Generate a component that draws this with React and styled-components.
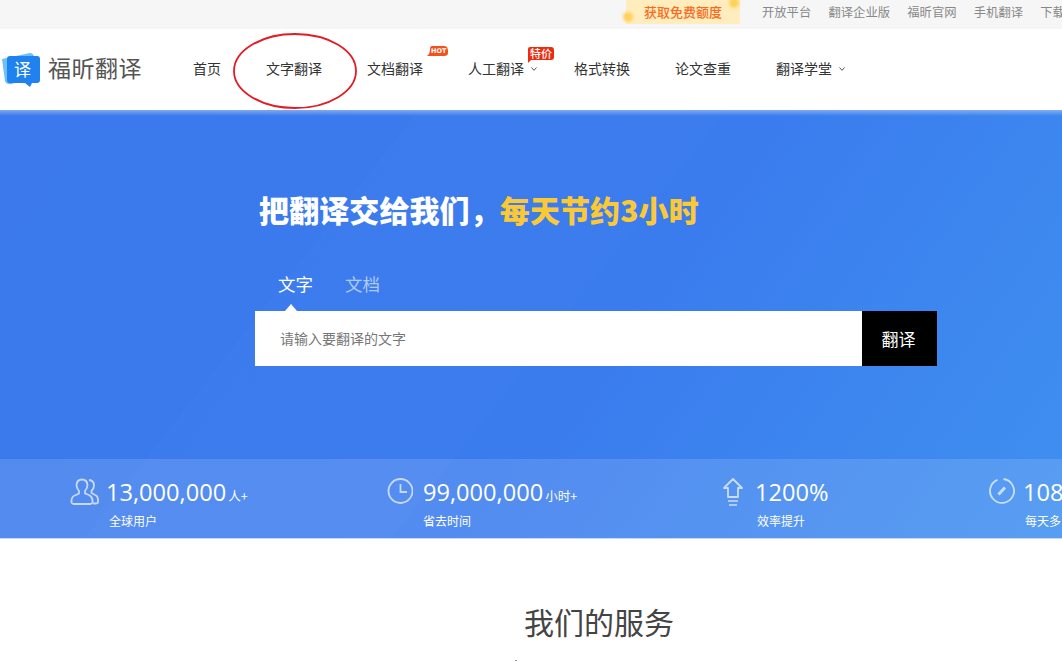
import styled, { createGlobalStyle } from 'styled-components'

const Global = createGlobalStyle`
html,body{margin:0;padding:0;background:#fff;overflow:hidden;}
body{font-family:"Noto Sans CJK SC","Noto Sans",sans-serif;}
*{box-sizing:border-box;}
`
const Page = styled.div`
position:relative;
width:1062px;
height:661px;
overflow:hidden;
display:flex;
flex-direction:column;
`
const TopBar = styled.div`
height:29px;
flex:none;
background:#f6f6f6;
display:flex;
padding-left:626px;
font-size:12.3px;
color:#888;
white-space:nowrap;
`
const Promo = styled.div`
position:relative;
flex:none;
width:114px;
height:24px;
padding-bottom:2px;
background:#ffedbd;
color:#fb6a1c;
font-weight:500;
display:flex;
align-items:center;
justify-content:center;
font-size:13px;
`
const Spark = styled.span`
position:absolute;
width:10px;
height:10px;
border-radius:50%;
background:#fdd15b;
filter:blur(1.5px);
left:${p => p.$x}px;
top:${p => p.$y}px;
`
const TopLinks = styled.div`
display:flex;
flex:none;
gap:17.3px;
margin-left:22px;
height:24px;
align-items:center;
`
const TopLink = styled.span`
flex:none;
`
const Nav = styled.div`
height:81px;
flex:none;
display:flex;
align-items:center;
background:#fff;
`
const Logo = styled.div`
width:193px;
flex:none;
display:flex;
align-items:center;
gap:8px;
`
const LogoText = styled.span`
font-size:23px;
color:#555;
letter-spacing:0.5px;
margin-bottom:6px;
`
const Menu = styled.div`
display:flex;
gap:45px;
font-size:14px;
color:#333;
margin-bottom:3px;
`
const MenuItem = styled.div`
position:relative;
white-space:nowrap;
line-height:20px;
padding-right:${p => (p.$pad ? 5 : 0)}px;
`
const Chevron = styled.svg`
position:absolute;
left:63px;
top:9px;
width:6px;
height:4px;
`
const HotTag = styled.svg`
position:absolute;
left:60px;
top:-12px;
width:22px;
height:13px;
`
const HotText = styled.span`
position:absolute;
left:64px;
top:-12px;
font-family:"DejaVu Sans",sans-serif;
font-weight:bold;
font-size:6.5px;
line-height:11px;
color:#fff;
`
const PriceTag = styled.span`
position:absolute;
left:60px;
top:-11px;
width:26px;
height:13px;
background:#ef2b0e;
border-radius:2px 3px 3px 0;
color:#fff;
font-size:11px;
font-weight:500;
line-height:13px;
text-align:center;
&::after{
 content:'';
 position:absolute;
 left:0;
 top:13px;
 border-top:3px solid #ef2b0e;
 border-right:3px solid transparent;
}
`
const Ring = styled.svg`
position:absolute;
left:230px;
top:30px;
width:130px;
height:82px;
`
const Hero = styled.div`
position:relative;
height:429px;
flex:none;
overflow:hidden;
color:#fff;
background:
 linear-gradient(180deg,rgba(255,255,255,.35) 0,rgba(255,255,255,0) 6px),
 linear-gradient(128deg,transparent 0 30%,rgba(255,255,255,.012) 30% 52%,transparent 52%),
 linear-gradient(125deg,#3b79ec 0,#3a7bee 55%,#3f90f0 100%);
display:flex;
flex-direction:column;
border-bottom:1px solid #c4d9f8;
`
const Main = styled.div`
height:349px;
flex:none;
padding:80px 0 0 255px;
`
const Headline = styled.h1`
margin:0 0 0 4px;
font-size:30px;
line-height:38px;
font-weight:900;
letter-spacing:0.1px;
white-space:nowrap;
`
const Gold = styled.span`
color:#fcc936;
`
const Tabs = styled.div`
display:flex;
gap:32px;
margin:42px 0 0 23px;
height:41px;
font-size:17.5px;
line-height:28px;
`
const Tab = styled.div`
position:relative;
color:${p => (p.$on ? '#fff' : 'rgba(255,255,255,.6)')};
&::after{
 content:'';
 display:${p => (p.$on ? 'block' : 'none')};
 position:absolute;
 left:7px;
 top:34px;
 border-left:6px solid transparent;
 border-right:6px solid transparent;
 border-bottom:7px solid #fff;
}
`
const SearchBox = styled.div`
display:flex;
width:682px;
height:55px;
`
const Input = styled.div`
flex:1;
background:#fff;
color:#777;
font-size:14px;
padding:0 0 2px 25px;
display:flex;
align-items:center;
`
const Go = styled.div`
width:75px;
background:#000;
color:#fff;
font-size:17px;
padding-right:2px;
display:flex;
align-items:center;
justify-content:center;
`
const Stats = styled.div`
height:79px;
flex:none;
background:rgba(255,255,255,.13);
display:flex;
padding:16px 0 0 70px;
white-space:nowrap;
`
const Stat = styled.div`
width:${p => p.$w}px;
flex:none;
display:flex;
`
const StatIcon = styled.svg`
width:${p => p.$w}px;
height:30px;
flex:none;
margin:2px ${p => p.$gap}px 0 0;
fill:none;
stroke:rgba(255,255,255,.68);
stroke-width:1.8;
`
const Num = styled.div`
font-family:"Open Sans","Noto Sans CJK SC",sans-serif;
font-size:23.6px;
line-height:34px;
height:34px;
`
const Unit = styled.span`
font-family:"Noto Sans CJK SC",sans-serif;
font-size:12.5px;
margin-left:2px;
`
const StatLabel = styled.div`
font-size:12px;
line-height:16px;
margin-top:4px;
margin-left:${p => p.$off}px;
`
const Services = styled.h2`
margin:62px 0 0;
text-align:center;
font-size:30px;
line-height:40px;
font-weight:400;
color:#444;
padding-left:136px;
`
const Tick = styled.span`
position:absolute;
left:515px;
top:660px;
width:2px;
height:1px;
background:#999;
`

const Down = () => (
  <Chevron viewBox="0 0 6 4"><path d="M.5.5 3 3.300 5.500.5" fill="none" stroke="#555" /></Chevron>
)

const App = () => {
  return (
    <Page>
      <Global />
      <TopBar>
        <Promo>
          <Spark $x={-3} $y={12} />
          <Spark $x={103} $y={-2} />
          获取免费额度
        </Promo>
        <TopLinks>
          <TopLink>开放平台</TopLink>
          <TopLink>翻译企业版</TopLink>
          <TopLink>福昕官网</TopLink>
          <TopLink>手机翻译</TopLink>
          <TopLink>下载</TopLink>
        </TopLinks>
      </TopBar>
      <Nav>
        <Logo>
          <svg width="40" height="36" viewBox="0 0 40 36">
            <path d="M2 7 30 1Q33 1 34 4L37 20 12 32H9Q6 32 5 29Z" fill="#6cc0f6" />
            <path d="M10 4H37Q40 4 40 7V28Q40 31 37 31H32L30 35 25 31H10Q7 31 7 28V7Q7 4 10 4Z" fill="#1f82ee" />
            <text x="14" y="24" fontSize="17" fill="#fff" fontFamily="Noto Sans CJK SC">译</text>
          </svg>
          <LogoText>福昕翻译</LogoText>
        </Logo>
        <Menu>
          <MenuItem>首页</MenuItem>
          <MenuItem>文字翻译</MenuItem>
          <MenuItem>
            文档翻译
            <HotTag viewBox="0 0 22 13"><path d="M5 0H17Q21 0 21 5V7Q21 10 17 10H0Q3 8 3 3Q3 0 5 0Z" fill="#f5511c" /></HotTag>
            <HotText>HOT</HotText>
          </MenuItem>
          <MenuItem $pad>
            人工翻译
            <Down />
            <PriceTag>特价</PriceTag>
          </MenuItem>
          <MenuItem>格式转换</MenuItem>
          <MenuItem>论文查重</MenuItem>
          <MenuItem>
            翻译学堂
            <Down />
          </MenuItem>
        </Menu>
      </Nav>
      <Hero>
        <Main>
          <Headline>把翻译交给我们，<Gold>每天节约3小时</Gold></Headline>
          <Tabs>
            <Tab $on>文字</Tab>
            <Tab>文档</Tab>
          </Tabs>
          <SearchBox>
            <Input>请输入要翻译的文字</Input>
            <Go>翻译</Go>
          </SearchBox>
        </Main>
        <Stats>
          <Stat $w={317}>
            <StatIcon viewBox="0 0 30 30" $w={30} $gap={6}>
              <path d="M1.500 25.500V23Q2 19 6 18L9 16.500V14Q6.500 11 6.500 8Q7 2.500 12 2.500Q17 2.500 17.500 8Q17.500 11 15 14V16.500L19 18Q22 19.500 22.500 23V25.500Q22 27 20 27H4Q2 27 1.500 25.500Z" />
              <path d="M19 3Q24 3.500 24 8.500Q24 11.500 21.500 14V16L25 18Q28 19 28 23V25Q28 26.500 25.500 26.500H23" />
            </StatIcon>
            <div>
              <Num>13,000,000<Unit>人+</Unit></Num>
              <StatLabel $off={3}>全球用户</StatLabel>
            </div>
          </Stat>
          <Stat $w={335}>
            <StatIcon viewBox="0 0 26 30" $w={26} $gap={10}>
              <circle cx="13.500" cy="14" r="12" />
              <path d="M13.500 7V15H20" />
            </StatIcon>
            <div>
              <Num>99,000,000<Unit>小时+</Unit></Num>
              <StatLabel $off={0}>省去时间</StatLabel>
            </div>
          </Stat>
          <Stat $w={266}>
            <StatIcon viewBox="0 0 22 30" $w={22} $gap={11}>
              <path d="M11 2 20 11H16V20H6V11H2Z" strokeLinejoin="round" />
              <path d="M6 24H16M7 28H15" strokeWidth="1.500" />
            </StatIcon>
            <div>
              <Num>1200%</Num>
              <StatLabel $off={2}>效率提升</StatLabel>
            </div>
          </Stat>
          <Stat $w={200}>
            <StatIcon viewBox="0 0 28 30" $w={28} $gap={7}>
              <path d="M15.500 2A12 12 0 1 1 9.500 2.800" />
              <path d="M10.500 17.500 17 10.500" strokeWidth="3" />
            </StatIcon>
            <div>
              <Num>108</Num>
              <StatLabel $off={2}>每天多</StatLabel>
            </div>
          </Stat>
        </Stats>
      </Hero>
      <Services>我们的服务</Services>
      <Tick />
      <Ring viewBox="0 0 130 82">
        <ellipse cx="65" cy="41" rx="61" ry="37" fill="none" stroke="#e31b23" strokeWidth="1.800" />
      </Ring>
    </Page>
  )
}

export default App
